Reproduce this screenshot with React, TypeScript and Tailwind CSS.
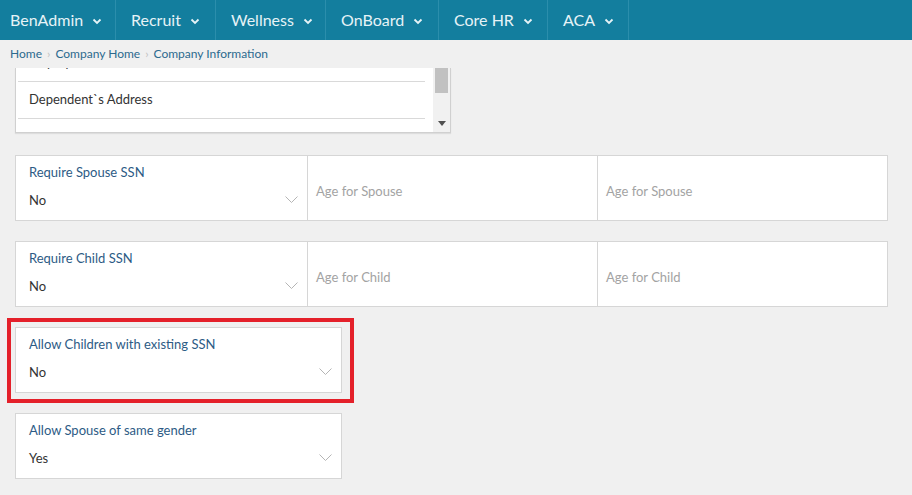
import React from "react";

const NAV = [
  { name: "BenAdmin", cls: "w-[116px] pl-[10px]" },
  { name: "Recruit", cls: "w-[100px] pl-[15px]" },
  { name: "Wellness", cls: "w-[110px] pl-[15px]" },
  { name: "OnBoard", cls: "w-[113px] pl-[15px]" },
  { name: "Core HR", cls: "w-[109px] pl-[15px]" },
  { name: "ACA", cls: "w-[81px] pl-[15px]" },
];

function NavChevron() {
  return (
    <svg width="10" height="7" viewBox="0 0 10 7" className="ml-[9px] mt-[2px] shrink-0">
      <path d="M1.5 1.5 L5 5 L8.5 1.5" fill="none" stroke="#e6f3f7" strokeWidth="1.8" />
    </svg>
  );
}

function SelectChevron() {
  return (
    <svg width="13" height="8" viewBox="0 0 13 8">
      <path d="M0.5 0.5 L6.5 6.5 L12.5 0.5" fill="none" stroke="#b5b5b5" strokeWidth="1" />
    </svg>
  );
}

function SelectCell({ label, value }: { label: string; value: string }) {
  return (
    <div className="h-full pl-[13px] pr-[9px] pt-[8px]">
      <div className="text-[13px] leading-[16px] text-[#2d5b85]">{label}</div>
      <div className="mt-[12px] flex items-center justify-between">
        <span className="text-[13px] leading-[16px] text-[#333]">{value}</span>
        <SelectChevron />
      </div>
    </div>
  );
}

function InputCell({ placeholder }: { placeholder: string }) {
  return (
    <div className="flex h-full items-center border-l border-[#d6d6d6] pl-[8px] pt-[7px]">
      <span className="text-[13px] text-[#a3a3a3]">{placeholder}</span>
    </div>
  );
}

function TripleRow({ label, value, placeholder }: { label: string; value: string; placeholder: string }) {
  return (
    <div className="grid h-[66px] w-[873px] grid-cols-[291px_290px_1fr] border border-[#d6d6d6] bg-white">
      <SelectCell label={label} value={value} />
      <InputCell placeholder={placeholder} />
      <InputCell placeholder={placeholder} />
    </div>
  );
}

function SingleRow({ label, value }: { label: string; value: string }) {
  return (
    <div className="h-[66px] w-[327px] border border-[#d6d6d6] bg-white">
      <SelectCell label={label} value={value} />
    </div>
  );
}

export default function App() {
  return (
    <div className="min-h-[495px] w-[912px] overflow-hidden bg-[#f0f0f0] font-['Lato','Open_Sans',sans-serif]">
      {/* top nav */}
      <div className="flex h-[40px] bg-[#137e9e]">
        {NAV.map((n) => (
          <div key={n.name} className={`flex shrink-0 items-center border-r border-[#2b8eac] ${n.cls}`}>
            <span className="whitespace-nowrap text-[16px] text-[#e6f3f7]">{n.name}</span>
            <NavChevron />
          </div>
        ))}
      </div>

      {/* breadcrumb */}
      <div className="flex h-[28px] items-center pl-[10px] text-[12px] text-[#2c6a8e]">
        <span>Home</span>
        <span className="mx-[5px] text-[#c2c2c2]">›</span>
        <span>Company Home</span>
        <span className="mx-[5px] text-[#c2c2c2]">›</span>
        <span>Company Information</span>
      </div>

      {/* list box */}
      <div className="ml-[15px] flex h-[65px] w-[436px] overflow-hidden border border-t-0 border-[#d0d0d0] bg-white shadow-[0_1px_1px_rgba(0,0,0,0.08)]">
        <div className="flex-1 overflow-hidden pl-[2px] pr-[8px]">
          <div className="-mt-[23px]">
            {["Employee Address", "Dependent`s Address", ""].map((t, i) => (
              <div key={i} className="flex h-[37px] items-center border-b border-[#d9d9d9] pl-[11px] text-[13px] text-[#333]">
                {t}
              </div>
            ))}
          </div>
        </div>
        <div className="flex w-[17px] flex-col bg-[#f1f1f1]">
          <div className="mx-[2px] h-[25px] bg-[#c1c1c1]" />
          <div className="flex-1" />
          <div className="mb-[6px] flex justify-center">
            <svg width="8" height="5" viewBox="0 0 8 5">
              <path d="M0 0 H8 L4 5 Z" fill="#505050" />
            </svg>
          </div>
        </div>
      </div>

      {/* form rows */}
      <div className="ml-[15px] mt-[22px] flex flex-col gap-[20px]">
        <TripleRow label="Require Spouse SSN" value="No" placeholder="Age for Spouse" />
        <TripleRow label="Require Child SSN" value="No" placeholder="Age for Child" />
        <div className="relative">
          <SingleRow label="Allow Children with existing SSN" value="No" />
          <div className="pointer-events-none absolute left-[-8px] top-[-9px] h-[85px] w-[347px] border-[4px] border-[#e4202a]" />
        </div>
        <SingleRow label="Allow Spouse of same gender" value="Yes" />
      </div>
    </div>
  );
}
